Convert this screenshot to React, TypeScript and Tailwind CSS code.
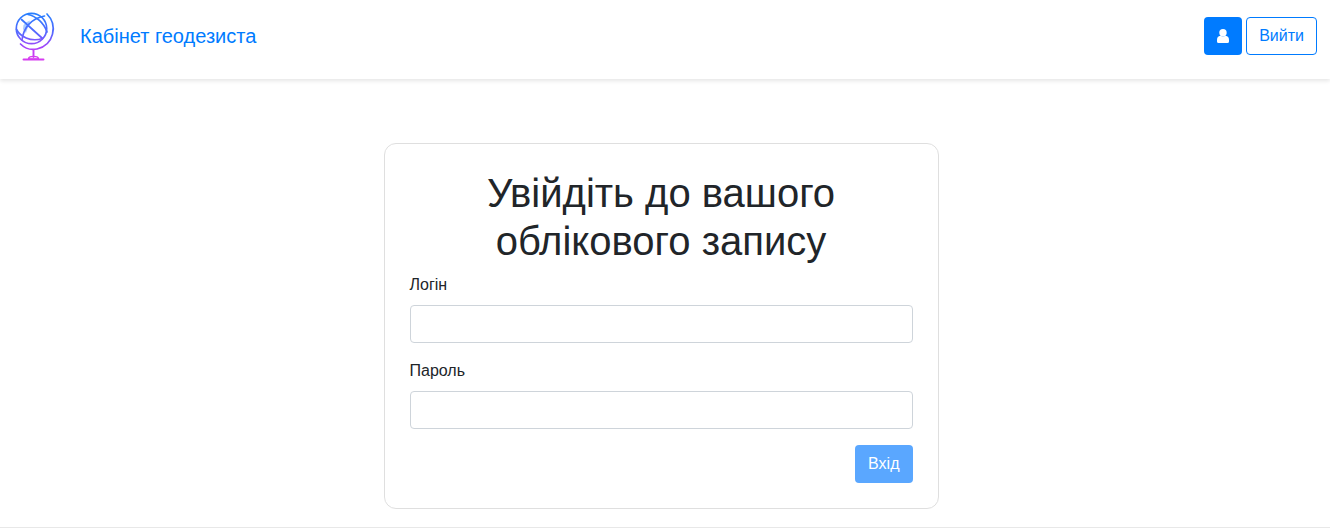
function GlobeLogo() {
    return (
        <svg width="44" height="52" viewBox="13 10 44 52" fill="none" strokeLinecap="round" className="flex-shrink-0">
            <defs>
                <linearGradient id="globeGrad" gradientUnits="userSpaceOnUse" x1="30" y1="13" x2="30" y2="60">
                    <stop offset="0" stopColor="#2680ff" />
                    <stop offset="0.45" stopColor="#5a66ff" />
                    <stop offset="0.8" stopColor="#b83cf8" />
                    <stop offset="1" stopColor="#dd33f2" />
                </linearGradient>
            </defs>
            <path d="M23.5 25 Q26 21.5 30 20.5 Q28 27 26 33 Q23.5 31 23 29 Z" fill="#a9ccff" />
            <g stroke="url(#globeGrad)" strokeWidth="1.7">
                <circle cx="31.5" cy="28.5" r="15.2" />
                <path d="M21.5 19.5 L42.5 38.5" />
                <path d="M22 40 C23.5 28 31 18.5 44.5 16" />
                <path d="M28 14.5 C36 16 44 23 47 32" />
                <path d="M16.5 29.5 C20 36 30 42.5 42.5 38.5" />
                <path d="M47 14 C58 25 54 45 37 49 C30 50.5 24.5 48 20.5 44" />
            </g>
            <path d="M33.5 50 V57" stroke="#c63ff5" strokeWidth="1.9" />
            <path d="M28.5 59 C28.5 55.5 38.5 55.5 38.5 59 Z" stroke="#d63cf0" strokeWidth="1.4" />
            <path d="M23.5 59.5 H43.5" stroke="#d63cf0" strokeWidth="1.9" />
        </svg>
    );
}

function UserIcon() {
    return (
        <svg width="12" height="14" viewBox="0 0 12 14" fill="currentColor">
            <circle cx="6" cy="3.8" r="3.7" />
            <path d="M3.4 6.8 Q6 8.4 8.6 6.8 Q12 7.2 12 11 V12.4 Q12 14 10.4 14 H1.6 Q0 14 0 12.4 V11 Q0 7.2 3.4 6.8 Z" />
        </svg>
    );
}

export default function App() {
    return (
        <div className="min-h-[528px] bg-white font-['Liberation_Sans',Arial,sans-serif] text-[16px] text-[#212529]">
            {/* Шапка */}
            <header className="h-[79px] flex items-center justify-between pl-[13px] pr-[13px] pb-[7px] bg-white shadow-[0_2px_4px_rgba(0,0,0,0.1)]">
                <div className="flex items-center">
                    <GlobeLogo />
                    <a className="ml-[23px] text-[20px] leading-[30px] text-[#007bff]">Кабінет геодезиста</a>
                </div>
                <div className="flex items-center gap-[4px]">
                    <button className="w-[38px] h-[38px] flex items-center justify-center rounded-[4px] bg-[#007bff] text-white">
                        <UserIcon />
                    </button>
                    <button className="h-[38px] px-[12px] rounded-[4px] border border-[#007bff] text-[#007bff] bg-white">
                        Вийти
                    </button>
                </div>
            </header>

            {/* Форма входу */}
            <main className="pt-[64px] pr-[8px] flex justify-center">
                <div className="w-[555px] h-[366px] border border-[#dfdfdf] rounded-[12px] px-[25px] pt-[25px]">
                    <h1 className="text-[40px] leading-[48px] font-normal text-center mb-[8px]">
                        Увійдіть до вашого облікового запису
                    </h1>
                    <div className="mb-[16px]">
                        <label className="block mb-[8px] leading-[24px]">Логін</label>
                        <input className="block w-full h-[38px] rounded-[4px] border border-[#ced4da] bg-white" />
                    </div>
                    <div className="mb-[16px]">
                        <label className="block mb-[8px] leading-[24px]">Пароль</label>
                        <input type="password" className="block w-full h-[38px] rounded-[4px] border border-[#ced4da] bg-white" />
                    </div>
                    <div className="flex justify-end">
                        <button className="h-[38px] px-[13px] rounded-[4px] bg-[#5aa7ff] text-white">Вхід</button>
                    </div>
                </div>
            </main>

            <footer className="mt-[18px] h-[1px] bg-[#e8e8e8]" />
        </div>
    );
}
